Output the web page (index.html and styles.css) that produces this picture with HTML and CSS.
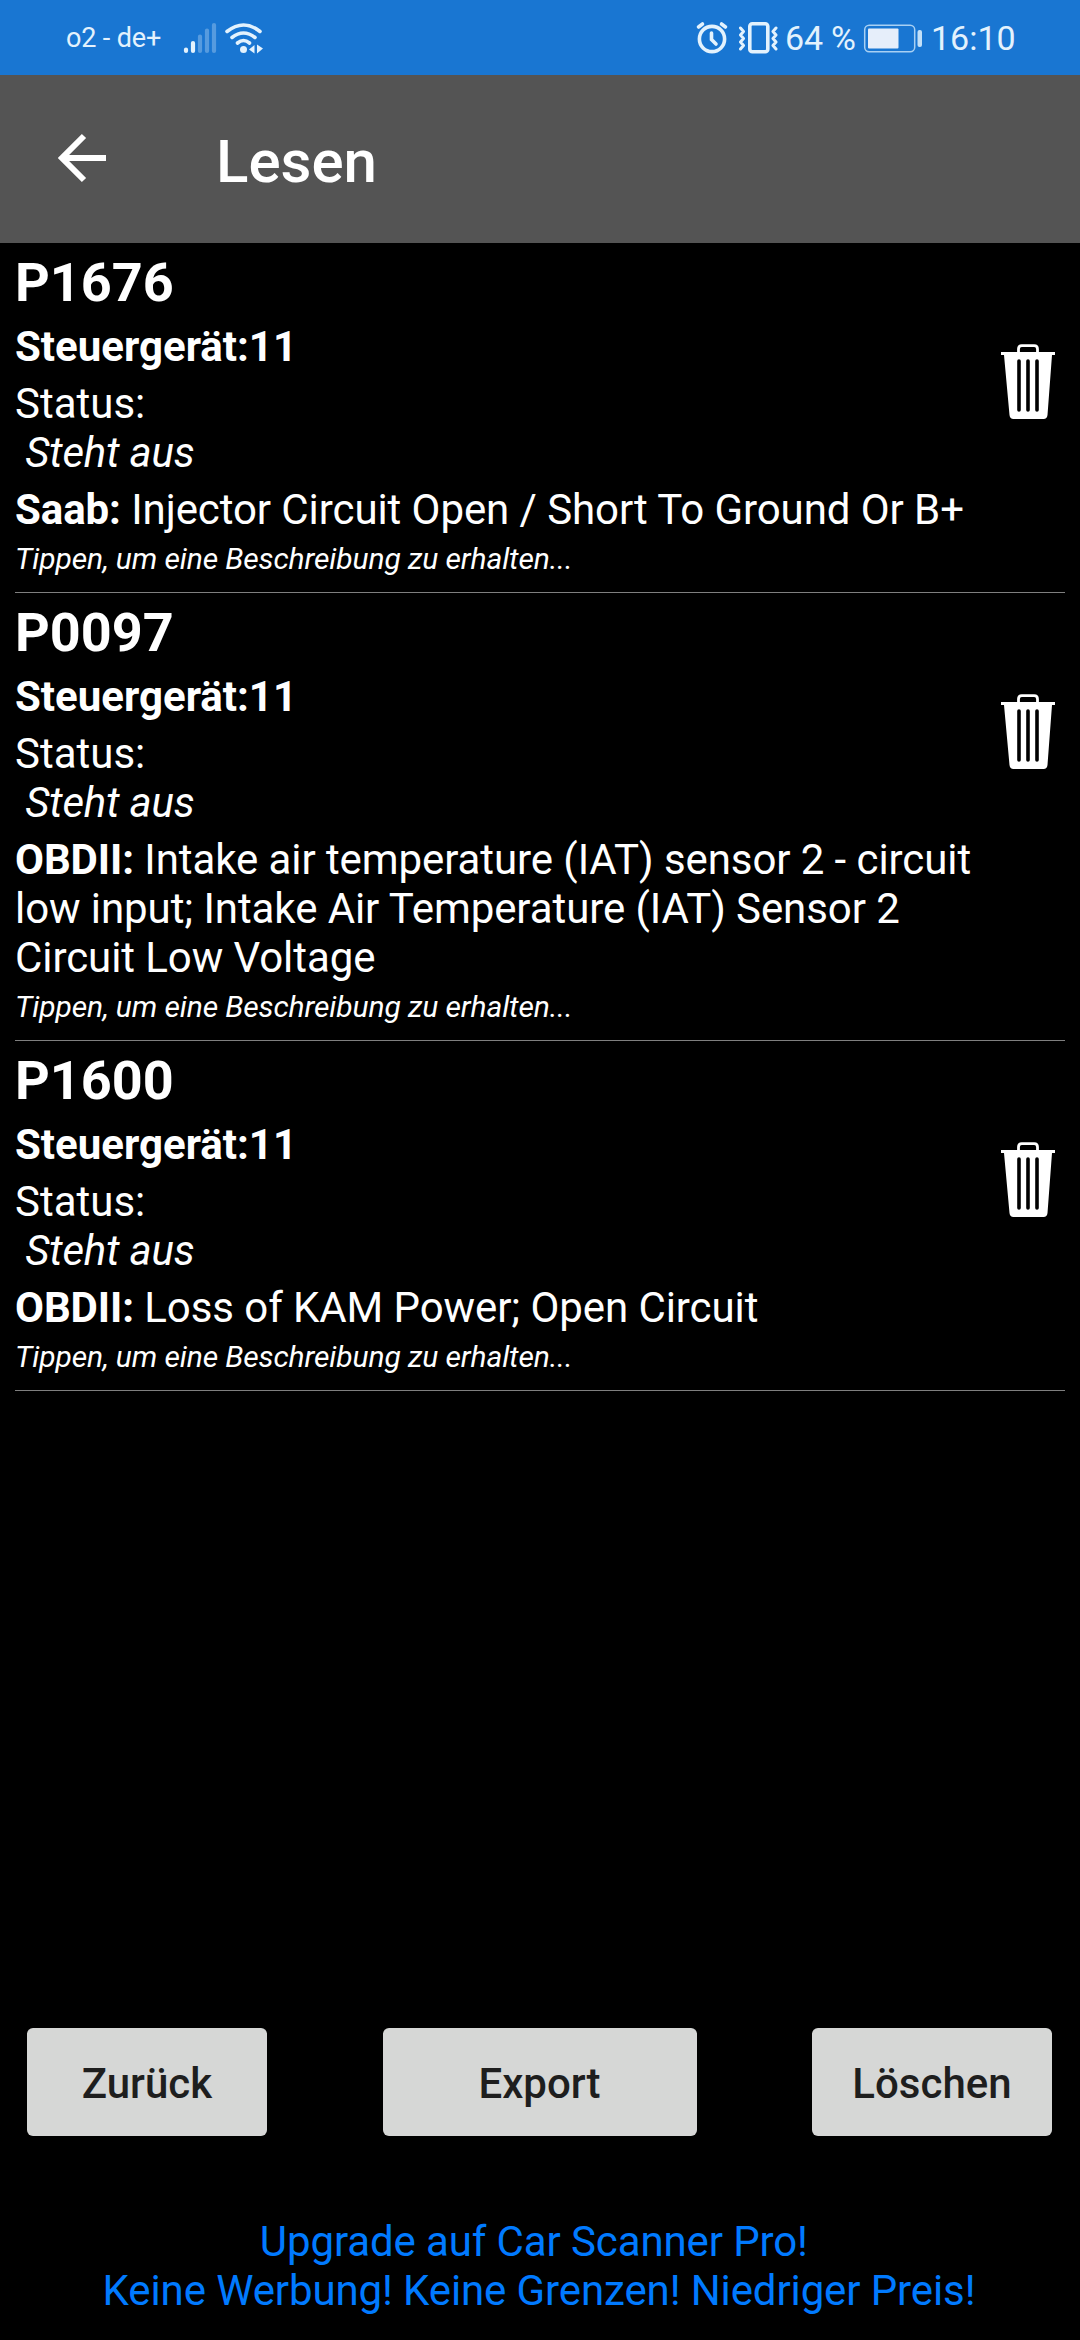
FILE: index.html
```html
<!DOCTYPE html>
<html lang="de">
<head>
<meta charset="utf-8">
<title>Lesen</title>
<link rel="stylesheet" href="styles.css">
</head>
<body>
<svg class="defs" width="0" height="0" aria-hidden="true">
  <symbol id="trash" viewBox="0 0 56 76">
    <path d="M18.500 9V5q0-3.300 3.300-3.300h12.400q3.300 0 3.300 3.300v4" fill="none" stroke="#fff" stroke-width="2.800"/>
    <path d="M1 8h54v3h-3l-4.500 60q-.4 4-4 4h-30q-3.600 0-4-4L4 11H1z" fill="#fff"/>
    <path d="M19 17v49M28 17v49M37 17v49" stroke="#000" stroke-width="3.600" stroke-linecap="round"/>
  </symbol>
</svg>
<div class="screen">
  <div class="statusbar">
    <span class="carrier">o2 - de+</span>
    <svg class="signal" width="34" height="32" viewBox="183 21 34 32" stroke="#e3f2fd" stroke-width="4.200" stroke-linecap="round">
      <path d="M186 48.500v1.500M193 42v8"/>
      <path d="M200 35.500v14.500M207 29.500v20.500M214 24v26" opacity=".3"/>
    </svg>
    <svg class="wifi" width="40" height="34" viewBox="224 20 40 34" fill="none" stroke="#e3f2fd" stroke-width="3.600" stroke-linecap="round">
      <path d="M227 30.500q16.500-13 33 0M232 36.500q11.500-9 23 0M237.500 42q6-5 12 0"/>
      <circle cx="243.500" cy="48.500" r="3.500" fill="#e3f2fd" stroke="none"/>
      <path d="M249 48.500l5.500-4.500v8.500zM263 47.500l-6-4v9z" fill="#e3f2fd" stroke="none"/>
    </svg>
    <span class="spacer"></span>
    <svg class="alarm" width="34" height="34" viewBox="695 20 34 34" fill="none" stroke="#e3f2fd" stroke-width="3.600" stroke-linecap="round">
      <circle cx="712" cy="38" r="12.600"/>
      <path d="M711.500 32v6.500l4.500 4.500M698.500 26l4-3M725.500 26l-4-3"/>
    </svg>
    <svg class="vibrate" width="42" height="34" viewBox="738 20 42 34" fill="none" stroke="#e3f2fd" stroke-width="3.600" stroke-linejoin="round" stroke-linecap="round">
      <rect x="749.800" y="22.800" width="18" height="28" rx="2.500"/>
      <path d="M740.500 27l3 3.500-3 3.500 3 3.500-3 3.500 3 3.500-3 3.500M776 27l-3 3.500 3 3.500-3 3.500 3 3.500-3 3.500 3 3.500" stroke-width="3"/>
    </svg>
    <span class="percent">64 %</span>
    <svg class="battery" width="60" height="30" viewBox="863 22 60 30" fill="none">
      <rect x="864.700" y="24.200" width="50" height="26.600" rx="4.500" stroke="#a8d0f3" stroke-width="1.500"/>
      <rect x="868" y="27.500" width="30.500" height="20" rx="1" fill="#e6eefa"/>
      <rect x="917.500" y="29" width="4.500" height="17" rx="2" fill="#c3e0f8"/>
    </svg>
    <span class="clock">16:10</span>
  </div>
  <div class="appbar">
    <svg class="back" width="50" height="50" viewBox="0 0 50 50" fill="none" stroke="#fff" stroke-width="6">
      <path d="M49 25H6M27 3L5 25l22 22"/>
    </svg>
    <h1 class="title">Lesen</h1>
  </div>
  <div class="list">
    <div class="item">
      <div class="info">
        <div class="code">P1676</div>
        <div class="ecu">Steuergerät:11</div>
        <div class="status">Status:</div>
        <div class="pending"> Steht aus</div>
        <div class="desc"><b>Saab:</b> Injector Circuit Open / Short To Ground Or B+</div>
        <div class="hint">Tippen, um eine Beschreibung zu erhalten...</div>
      </div>
      <svg class="trash"><use href="#trash"/></svg>
    </div>
    <div class="item">
      <div class="info">
        <div class="code">P0097</div>
        <div class="ecu">Steuergerät:11</div>
        <div class="status">Status:</div>
        <div class="pending"> Steht aus</div>
        <div class="desc"><b>OBDII:</b> Intake air temperature (IAT) sensor 2 - circuit low input; Intake Air Temperature (IAT) Sensor 2 Circuit Low Voltage</div>
        <div class="hint">Tippen, um eine Beschreibung zu erhalten...</div>
      </div>
      <svg class="trash"><use href="#trash"/></svg>
    </div>
    <div class="item">
      <div class="info">
        <div class="code">P1600</div>
        <div class="ecu">Steuergerät:11</div>
        <div class="status">Status:</div>
        <div class="pending"> Steht aus</div>
        <div class="desc"><b>OBDII:</b> Loss of KAM Power; Open Circuit</div>
        <div class="hint">Tippen, um eine Beschreibung zu erhalten...</div>
      </div>
      <svg class="trash"><use href="#trash"/></svg>
    </div>
  </div>
  <div class="actions">
    <button class="btn">Zurück</button>
    <button class="btn btn-wide">Export</button>
    <button class="btn">Löschen</button>
  </div>
  <div class="upgrade">Upgrade auf Car Scanner Pro!&nbsp;
Keine Werbung! Keine Grenzen! Niedriger Preis!</div>
</div>
</body>
</html>
```
FILE: styles.css
```css
* { box-sizing: border-box; }
body {
  margin: 0;
  background: #000;
  color: #fff;
  font-family: Roboto, sans-serif;
  font-size: 42px;
  line-height: 49px;
}
.defs { display: block; height: 0; }
.screen {
  width: 1080px;
  height: 2340px;
  display: flex;
  flex-direction: column;
  overflow: hidden;
}
.statusbar {
  height: 75px;
  flex: none;
  display: flex;
  align-items: center;
  padding: 0 65px 0 66px;
  background: #1976d2;
  color: #e3f2fd;
  white-space: nowrap;
}
.statusbar svg { flex: none; }
.carrier { font-size: 27px; width: 117px; padding-top: 2px; letter-spacing: -0.15px; }
.wifi { margin-left: 7px; }
.spacer { flex: 1; }
.vibrate { margin-left: 9px; }
.percent { font-size: 34px; width: 78px; margin-left: 5px; padding-top: 2px; letter-spacing: -0.2px; }
.clock { font-size: 34px; width: 84px; margin-left: 8px; padding-top: 2px; }
.appbar {
  height: 168px;
  flex: none;
  display: flex;
  align-items: center;
  padding: 0 57px;
  background: #545454;
}
.back { margin-top: -2px; }
.title {
  margin: 5px 0 0 109px;
  font-size: 60px;
  line-height: 70px;
  font-weight: 500;
}
.list { flex: 1; padding: 0 15px; }
.item {
  display: flex;
  align-items: flex-start;
  justify-content: space-between;
  padding: 7px 9px 16px 0;
  border-bottom: 1px solid #7f7f7f;
}
.info { width: 970px; }
.code { font-size: 54px; line-height: 65px; font-weight: 700; }
.ecu { margin-top: 7px; font-weight: 700; }
.status { margin-top: 8px; }
.pending { font-style: italic; white-space: pre; letter-spacing: -0.15px; }
.desc { margin-top: 8px; letter-spacing: -0.08px; }
.hint { margin-top: 7px; font-size: 30px; line-height: 35px; font-style: italic; letter-spacing: -0.11px; }
.trash { width: 56px; height: 76px; margin-top: 94px; flex: none; }
.actions {
  display: flex;
  justify-content: space-between;
  padding: 0 28px 0 27px;
  margin-bottom: 81px;
}
.btn {
  width: 240px;
  height: 108px;
  padding: 2px 0 0;
  border: 0;
  border-radius: 6px;
  background: #d6d7d6;
  color: #1e1e1e;
  font: 500 42px/49px Roboto, sans-serif;
}
.btn-wide { width: 314px; }
.upgrade {
  height: 123px;
  padding-right: 2px;
  color: #007aff;
  text-align: center;
  white-space: pre;
  letter-spacing: -0.11px;
}
```
